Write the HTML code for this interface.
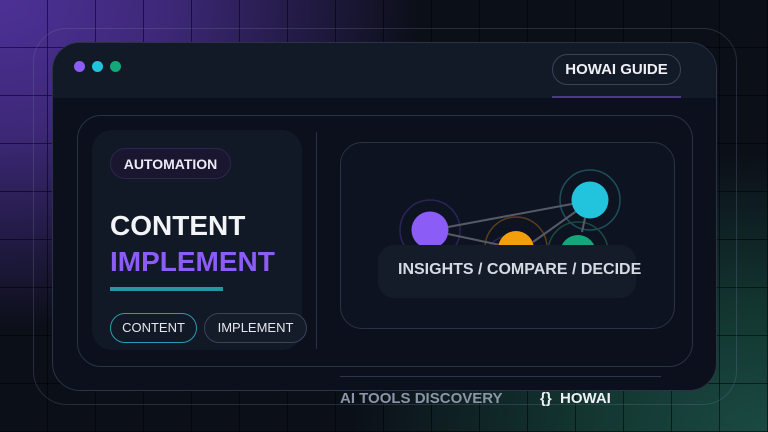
<!DOCTYPE html><html><head><style>
*{margin:0;padding:0;box-sizing:border-box}
body{width:768px;height:432px;overflow:hidden;position:relative;font-family:"Liberation Sans",sans-serif;font-weight:bold;
background:radial-gradient(ellipse 420px 330px at 0 0,#4d3196 0%,#3d2878 40%,rgba(20,15,35,0) 100%),radial-gradient(ellipse 420px 280px at 768px 432px,#1a4a42 0%,#133530 45%,rgba(10,20,25,0) 100%),#0b0f18}
.grid{position:absolute;inset:0;background-image:linear-gradient(to right,rgba(0,0,0,.55) 1px,transparent 1px),linear-gradient(to bottom,rgba(0,0,0,.55) 1px,transparent 1px);background-size:48px 48px;background-position:-1px -1px}
.abs{position:absolute}
</style></head><body>
<div class="grid"></div>
<div class="abs" style="left:33px;top:28px;width:704px;height:377px;border:1px solid rgba(120,130,160,.25);border-radius:34px"></div>
<div class="abs" style="left:52px;top:42px;width:665px;height:349px;border-radius:28px;background:#0b101c;border:1px solid #2a3348;overflow:hidden">
 <div style="height:55px;background:#131a27"></div>
</div>
<div class="abs" style="left:74px;top:61px;width:11px;height:11px;border-radius:50%;background:#8b5cf6"></div>
<div class="abs" style="left:92px;top:61px;width:11px;height:11px;border-radius:50%;background:#22c3dc"></div>
<div class="abs" style="left:110px;top:61px;width:11px;height:11px;border-radius:50%;background:#13a77a"></div>
<div class="abs" style="left:552px;top:54px;width:129px;height:31px;border:1px solid #3a4358;border-radius:16px;color:#eef0f5;font-size:15px;line-height:29px;text-align:center">HOWAI GUIDE</div>
<div class="abs" style="left:552px;top:96px;width:129px;height:2px;background:#4b3a8c"></div>
<div class="abs" style="left:77px;top:115px;width:616px;height:252px;border:1px solid #2a3245;border-radius:24px"></div>
<div class="abs" style="left:92px;top:130px;width:210px;height:220px;background:#111826;border-radius:20px"></div>
<div class="abs" style="left:110px;top:148px;width:121px;height:31px;background:#1a1630;border:1px solid #2e2550;border-radius:16px;color:#eceaf5;font-size:14px;line-height:31px;text-align:center">AUTOMATION</div>
<div class="abs" style="left:110px;top:210px;color:#f3f4f7;font-size:28px;line-height:32px">CONTENT</div>
<div class="abs" style="left:110px;top:246px;color:#8b5cf6;font-size:28px;line-height:32px">IMPLEMENT</div>
<div class="abs" style="left:110px;top:287px;width:113px;height:4px;background:#2596a8"></div>
<div class="abs" style="left:110px;top:313px;width:87px;height:30px;border:1px solid #2a9bb0;border-radius:15px;color:#e4e8ee;font-size:13px;font-weight:normal;line-height:28px;text-align:center">CONTENT</div>
<div class="abs" style="left:204px;top:313px;width:103px;height:30px;border:1px solid #3a4358;background:#141b29;border-radius:15px;color:#e4e8ee;font-size:13px;font-weight:normal;line-height:28px;text-align:center">IMPLEMENT</div>
<div class="abs" style="left:316px;top:132px;width:1px;height:217px;background:#2a3245"></div>
<div class="abs" style="left:340px;top:142px;width:335px;height:187px;border:1px solid #2a3245;border-radius:22px;background:#0d1320"></div>
<svg class="abs" style="left:0;top:0" width="768" height="432">
<g fill="none" stroke-width="1.5">
<circle cx="430" cy="230" r="30" stroke="#2e2358"/>
<circle cx="590" cy="200" r="30" stroke="#1d4f5a"/>
<circle cx="516" cy="248" r="31" stroke="#5a3e1a"/>
<circle cx="578" cy="252" r="30" stroke="#1a4a40"/>
<circle cx="510" cy="262" r="26" stroke="#2e2358"/>
</g>
<g stroke="#555b66" stroke-width="2">
<line x1="448" y1="227" x2="572" y2="204"/><line x1="448" y1="234" x2="500" y2="245"/><line x1="533" y1="242" x2="578" y2="210"/><line x1="585" y1="218" x2="582" y2="232"/>
</g>
<circle cx="430" cy="230" r="18.5" fill="#8b5cf6"/>
<circle cx="590" cy="200" r="18.5" fill="#22c3dc"/>
<circle cx="516" cy="249" r="18" fill="#f59e0b"/>
<circle cx="512" cy="258" r="10" fill="#8b5cf6"/>
<circle cx="578" cy="253" r="18" fill="#13a77a"/>
</svg>
<div class="abs" style="left:378px;top:245px;width:258px;height:53px;background:#151c29;border-radius:16px;color:#d6dae3;font-size:16px;line-height:50px;padding-left:20px;white-space:nowrap">INSIGHTS / COMPARE / DECIDE</div>
<div class="abs" style="left:340px;top:376px;width:321px;height:1px;background:#2e3649"></div>
<div class="abs" style="left:340px;top:390px;color:#8b95a5;font-size:15px">AI TOOLS DISCOVERY</div>
<div class="abs" style="left:540px;top:390px;color:#eef0f5;font-size:15px">{}&nbsp; HOWAI</div>
</body></html>
